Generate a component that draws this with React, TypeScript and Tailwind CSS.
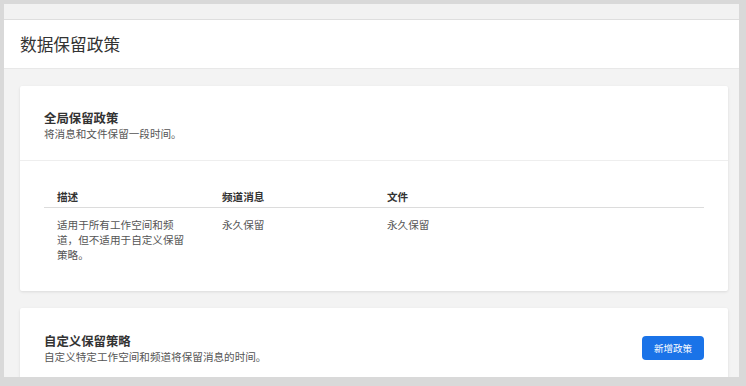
import React from "react";

const font = { fontFamily: '"Noto Sans CJK SC", "Noto Sans", sans-serif' };

export default function App() {
  return (
    <div
      className="h-[386px] w-[746px] overflow-hidden bg-[#d9d9d9] pl-[4px] pt-[4px] pr-[7px] pb-[9px]"
      style={font}
    >
      <div className="flex h-full flex-col overflow-hidden bg-[#f3f3f3]">
        <div className="h-[16px] shrink-0 border-b border-[#dedede] bg-[#f2f2f2]" />
        <div className="flex h-[49px] shrink-0 items-center border-b border-[#e8e8e8] bg-white pl-[16px]">
          <h1 className="text-[16.7px] leading-none font-normal text-[#333]">数据保留政策</h1>
        </div>
        <div className="flex flex-1 flex-col gap-[17px] overflow-hidden pt-[17px] pl-[16px] pr-[11px]">
          <div className="shrink-0 rounded-[2px] bg-white shadow-[0_1px_3px_rgba(0,0,0,0.1)]">
            <div className="px-[24px] pt-[24px] pb-[20px]">
              <div className="text-[12.4px] leading-[17px] font-semibold text-[#333]">全局保留政策</div>
              <div className="text-[10.6px] leading-[13px] text-[#555]">将消息和文件保留一段时间。</div>
            </div>
            <div className="border-t border-[#eeeeee] px-[24px] pt-[28px] pb-[29px]">
              <div className="grid grid-cols-[165px_165px_1fr] border-b border-[#dcdcdc] pb-[3px] text-[10.6px] leading-[15px] font-semibold text-[#333]">
                <div className="pl-[13px]">描述</div>
                <div className="pl-[13px]">频道消息</div>
                <div className="pl-[13px]">文件</div>
              </div>
              <div className="grid grid-cols-[165px_165px_1fr] pt-[9px] text-[10.6px] leading-[15px] text-[#555]">
                <div className="pl-[13px]">
                  <div className="w-[128.5px]">适用于所有工作空间和频道，但不适用于自定义保留策略。</div>
                </div>
                <div className="pl-[13px]">永久保留</div>
                <div className="pl-[13px]">永久保留</div>
              </div>
            </div>
          </div>
          <div className="shrink-0 rounded-[2px] bg-white shadow-[0_1px_3px_rgba(0,0,0,0.1)]">
            <div className="flex items-center justify-between px-[24px] pt-[25px] pb-[24px]">
              <div>
                <div className="text-[12.4px] leading-[17px] font-semibold text-[#333]">自定义保留策略</div>
                <div className="text-[10.6px] leading-[13px] text-[#555]">自定义特定工作空间和频道将保留消息的时间。</div>
              </div>
              <button className="flex h-[24px] w-[62px] items-center justify-center rounded-[4px] bg-[#1a73e8] text-[9.5px] text-white">
                新增政策
              </button>
            </div>
          </div>
        </div>
      </div>
    </div>
  );
}
